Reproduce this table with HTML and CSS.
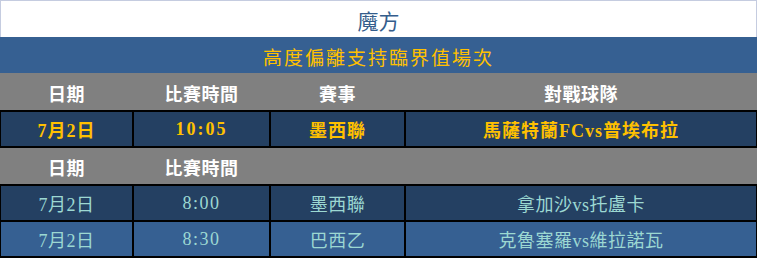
FILE: index.html
```html
<!DOCTYPE html>
<html lang="zh-Hant">
<head>
  <meta charset="UTF-8">
  <title>魔方</title>
  <link rel="stylesheet" href="styles.css">
</head>
<body>
  <div class="board">
    <div class="board-title">魔方</div>
    <div class="board-band">高度偏離支持臨界值場次</div>

    <div class="row head">
      <div class="cell">日期</div>
      <div class="cell">比賽時間</div>
      <div class="cell">賽事</div>
      <div class="cell">對戰球隊</div>
    </div>

    <div class="group">
      <div class="row data hot">
        <div class="cell">7月2日</div>
        <div class="cell time">10:05</div>
        <div class="cell">墨西聯</div>
        <div class="cell">馬薩特蘭FCvs普埃布拉</div>
      </div>
    </div>

    <div class="row head">
      <div class="cell">日期</div>
      <div class="cell">比賽時間</div>
      <div class="cell"></div>
      <div class="cell"></div>
    </div>

    <div class="group">
      <div class="row data">
        <div class="cell">7月2日</div>
        <div class="cell time">8:00</div>
        <div class="cell">墨西聯</div>
        <div class="cell">拿加沙vs托盧卡</div>
      </div>
      <div class="row data alt">
        <div class="cell">7月2日</div>
        <div class="cell time">8:30</div>
        <div class="cell">巴西乙</div>
        <div class="cell">克魯塞羅vs維拉諾瓦</div>
      </div>
    </div>
  </div>
</body>
</html>
```

FILE: styles.css
```css
* {
  margin: 0;
  padding: 0;
  box-sizing: border-box;
}

body {
  background-color: #ffffff;
  overflow: hidden;
  font-family: "Liberation Serif", "Noto Sans CJK TC", serif;
}

.board {
  width: 757px;
}

.board-title {
  height: 37px;
  border: 1px solid #c5cce0;
  border-bottom: none;
  background-color: #ffffff;
  color: #345d8c;
  font-size: 21px;
  display: flex;
  justify-content: center;
  align-items: center;
  padding-top: 2px;
}

.board-band {
  height: 36px;
  background-color: #366092;
  color: #ffc000;
  font-size: 19px;
  letter-spacing: 2px;
  display: flex;
  justify-content: center;
  align-items: center;
  padding-top: 3px;
}

.row {
  display: grid;
  grid-template-columns: 133px 137px 135px 352px;
}

.cell {
  display: flex;
  justify-content: center;
  align-items: center;
  font-size: 18px;
  letter-spacing: 0.5px;
}

.head {
  height: 37px;
  background-color: #808080;
  color: #ffffff;
  font-weight: bold;
}

.head .cell {
  padding-top: 2px;
}

.head + .group + .head {
  height: 36px;
}

.group {
  border-top: 1px solid #000;
  border-bottom: 1px solid #000;
}

.data {
  height: 36px;
  background-color: #244062;
  color: #9cd8d2;
}

.data .cell {
  border: 1px solid #000;
}

.data .time {
  letter-spacing: 1.5px;
}

.data.alt {
  background-color: #366092;
}

.data.hot {
  color: #ffc000;
  font-weight: bold;
}

.data.hot .cell {
  letter-spacing: 1px;
}

.data.hot .time {
  letter-spacing: 2px;
}
```
